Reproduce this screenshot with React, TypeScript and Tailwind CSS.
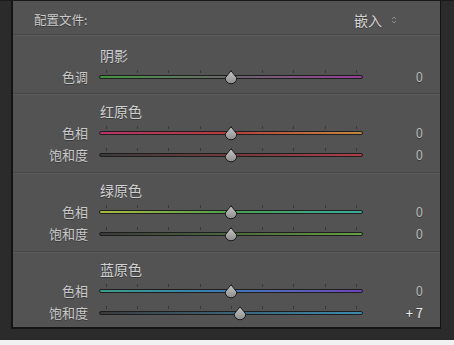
import React from "react";

type Row = { label: string; track: string; value: number };
type Section = { title: string; rows: Row[]; top: string; bottom: string };

const sections: Section[] = [
  {
    title: "阴影",
    top: "pt-[11px]",
    bottom: "pb-[5px]",
    rows: [{ label: "色调", track: "bg-linear-to-r from-[#3f963f] via-[#6a656a] to-[#983c98]", value: 0 }],
  },
  {
    title: "红原色",
    top: "pt-[8px]",
    bottom: "pb-[6px]",
    rows: [
      { label: "色相", track: "bg-linear-to-r from-[#b8346a] via-[#b83c3c] to-[#c0883e]", value: 0 },
      { label: "饱和度", track: "bg-linear-to-r from-[#3a3a3a] via-[#703a3e] to-[#b03e4a]", value: 0 },
    ],
  },
  {
    title: "绿原色",
    top: "pt-[8px]",
    bottom: "pb-[6px]",
    rows: [
      { label: "色相", track: "bg-linear-to-r from-[#aab840] via-[#4aa04a] to-[#3caaa0]", value: 0 },
      { label: "饱和度", track: "bg-linear-to-r from-[#3a3a3a] via-[#4c683c] to-[#64a042]", value: 0 },
    ],
  },
  {
    title: "蓝原色",
    top: "pt-[8px]",
    bottom: "pb-[3px]",
    rows: [
      { label: "色相", track: "bg-linear-to-r from-[#3c9e86] via-[#3c78b8] to-[#6c44bc]", value: 0 },
      { label: "饱和度", track: "bg-linear-to-r from-[#3a3a3a] via-[#3a6278] to-[#3c8cb2]", value: 7 },
    ],
  },
];

const ticks = [7, 38, 69, 101, 132, 163, 194, 226, 257];

function Thumb() {
  return (
    <svg width="14" height="15" viewBox="0 0 14 15">
      <defs>
        <linearGradient id="thumbFill" x1="0" y1="0" x2="0" y2="1">
          <stop offset="0" stopColor="#c8c8c8" />
          <stop offset="1" stopColor="#8c8c8c" />
        </linearGradient>
      </defs>
      <path d="M7 0.8 L12.8 8 A5.8 5.8 0 0 1 1.2 8 Z" fill="url(#thumbFill)" stroke="#1c1c1c" strokeWidth="1" />
    </svg>
  );
}

function Slider({ track, value }: { track: string; value: number }) {
  return (
    <div className="relative w-[264px] h-[22px]">
      {ticks.map((t) => (
        <div key={t} className="absolute top-[4px] w-px h-[3px] bg-[#383838]" style={{ left: t }} />
      ))}
      <div className={`absolute left-0 right-0 top-[9px] h-[4px] rounded-full border border-[#1e1e1e] ${track}`} />
      <div className="absolute top-[4px]" style={{ left: `calc(${50 + value / 2}% - 7px)` }}>
        <Thumb />
      </div>
    </div>
  );
}

export default function App() {
  return (
    <div className="w-[454px] h-[345px] bg-[#f2f2f2] font-['Noto_Sans_CJK_SC',sans-serif]">
      <div className="h-[340px] bg-[#2b2b2b] pl-[11px] border-t border-[#1a1a1a]">
        <div className="w-[430px] border-l-2 border-r border-b-2 border-[#141414] bg-[#535353] text-[#c9c9c9] [text-shadow:0_1px_0_#3a3a3a]">
          {/* header */}
          <div className="h-[33px] flex items-center justify-between pl-[21px] pr-[43px] pt-[5px]">
            <span className="text-[12.5px]">配置文件:</span>
            <div className="flex items-center gap-[9px]">
              <span className="text-[14px] text-[#d4d4d4]">嵌入</span>
              <svg width="6" height="10" viewBox="0 0 6 10">
                <path d="M1 4 L3 2 L5 4" fill="none" stroke="#8e8e8e" strokeWidth="1" />
                <path d="M1 6 L3 8 L5 6" fill="none" stroke="#8e8e8e" strokeWidth="1" />
              </svg>
            </div>
          </div>

          {sections.map((s) => (
            <div key={s.title} className={`border-t border-[#474747] shadow-[inset_0_1px_0_#5b5b5b] ${s.top} ${s.bottom}`}>
              <div className="h-[18px] leading-[18px] pl-[87px] text-[14px] text-[#d0d0d0]">{s.title}</div>
              <div className="mt-[2px] flex flex-col">
                {s.rows.map((r) => (
                  <div key={r.label} className="h-[22px] flex items-center">
                    <span className="w-[75px] text-right text-[13px] leading-[22px]">{r.label}</span>
                    <div className="ml-[11px]">
                      <Slider track={r.track} value={r.value} />
                    </div>
                    <span
                      className={`w-[60px] text-right text-[13px] leading-[22px] ${
                        r.value ? "text-[#ececec]" : "text-[#b4b4b4]"
                      }`}
                    >
                      {r.value > 0 ? `+ ${r.value}` : r.value}
                    </span>
                  </div>
                ))}
              </div>
            </div>
          ))}
        </div>
      </div>
    </div>
  );
}
